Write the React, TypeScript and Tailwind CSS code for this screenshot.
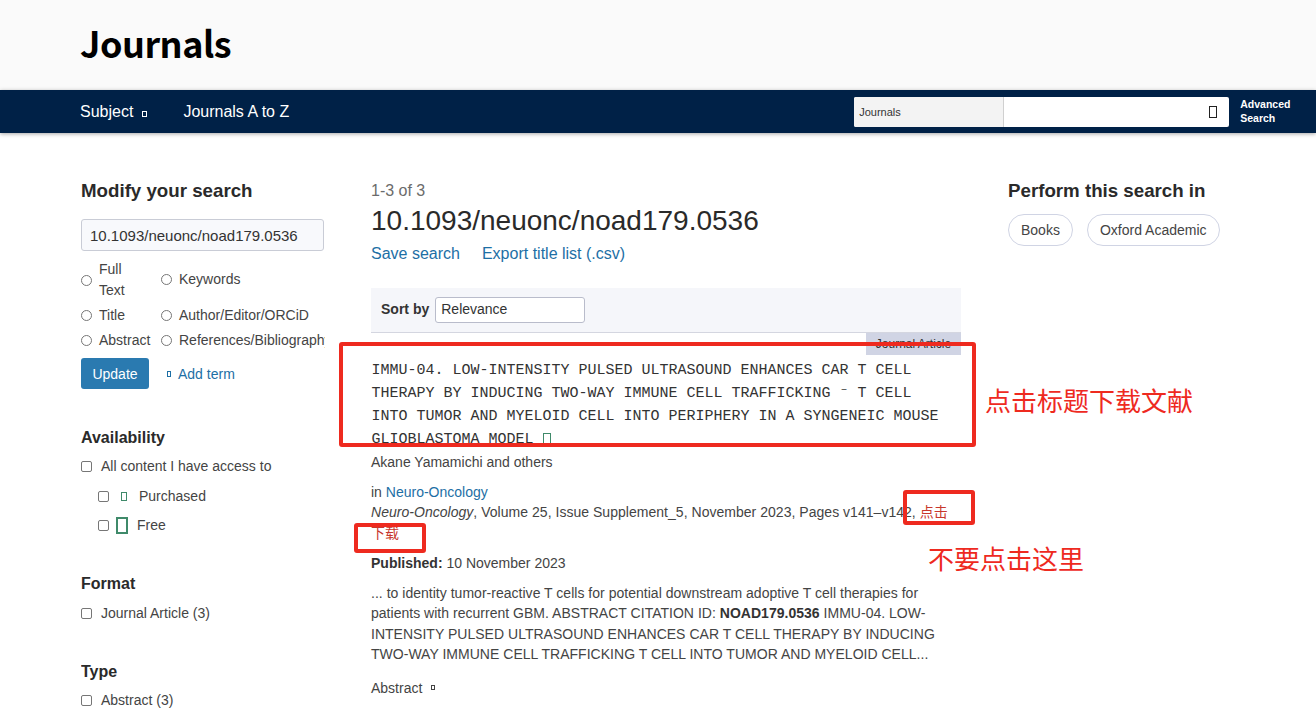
import React from "react";

const Tofu = ({ className = "" }: { className?: string }) => (
  <span className={`inline-block border ${className}`} />
);

const Radio = ({ label, className = "" }: { label: React.ReactNode; className?: string }) => (
  <div className={`flex items-center ${className}`}>
    <span className="w-[11px] h-[11px] shrink-0 rounded-full border border-[#767676] bg-white" />
    <span className="ml-[7px] text-[14px] leading-[21px] text-[#444] whitespace-nowrap">{label}</span>
  </div>
);

const Check = ({ label, className = "" }: { label: React.ReactNode; className?: string }) => (
  <div className={`flex items-center ${className}`}>
    <span className="w-[11px] h-[11px] shrink-0 rounded-[2px] border border-[#767676] bg-white" />
    <span className="ml-[9px] text-[14px] leading-[20px] text-[#444] whitespace-nowrap">{label}</span>
  </div>
);

function Sidebar() {
  return (
    <aside className="w-[244px] shrink-0 overflow-hidden text-[#333]">
      <h2 className="text-[18.72px] leading-[24px] font-bold text-[#2a2a2a]">Modify your search</h2>
      <div className="mt-[16px] w-[243px] h-[32px] rounded-[3px] border border-[#c9ccd6] bg-[#f8f9fc] pl-[8px] text-[15px] leading-[31px] text-[#333]">
        10.1093/neuonc/noad179.0536
      </div>
      <div className="mt-[8px] grid grid-cols-[80px_1fr]">
        <Radio label={<span className="block whitespace-normal w-[40px]">Full Text</span>} />
        <Radio label="Keywords" className="-mt-[2px]" />
        <Radio label="Title" className="mt-[4px]" />
        <Radio label="Author/Editor/ORCiD" className="mt-[4px]" />
        <Radio label="Abstract" className="mt-[4px]" />
        <Radio label="References/Bibliography" className="mt-[4px]" />
      </div>
      <div className="mt-[7px] flex items-center">
        <span className="w-[68px] h-[31px] rounded-[3px] bg-[#2a7ab0] text-white text-[14px] leading-[32px] text-center">Update</span>
        <Tofu className="ml-[18px] w-[4px] h-[6px] border-[#1d6fa5]" />
        <span className="ml-[7px] pt-[1px] text-[14px] text-[#1d6fa5]">Add term</span>
      </div>
      <h3 className="mt-[38px] text-[16px] leading-[22px] font-bold text-[#2a2a2a]">Availability</h3>
      <Check label="All content I have access to" className="mt-[7px]" />
      <div className="mt-[10px] ml-[17px] flex items-center h-[20px]">
        <span className="w-[11px] h-[11px] rounded-[2px] border border-[#767676] bg-white" />
        <Tofu className="ml-[12px] w-[6px] h-[9px] border-[#3f8a6a]" />
        <span className="ml-[12px] text-[14px] text-[#444]">Purchased</span>
      </div>
      <div className="mt-[9px] ml-[17px] flex items-center h-[20px]">
        <span className="w-[11px] h-[11px] rounded-[2px] border border-[#767676] bg-white" />
        <Tofu className="ml-[7px] w-[12px] h-[17px] border-2 border-[#3f8a6a]" />
        <span className="ml-[9px] text-[14px] text-[#444]">Free</span>
      </div>
      <h3 className="mt-[38px] text-[16px] leading-[22px] font-bold text-[#2a2a2a]">Format</h3>
      <Check label="Journal Article (3)" className="mt-[8px]" />
      <h3 className="mt-[38px] text-[16px] leading-[22px] font-bold text-[#2a2a2a]">Type</h3>
      <Check label="Abstract (3)" className="mt-[7px]" />
    </aside>
  );
}

function Main() {
  return (
    <main className="ml-[46px] w-[590px] shrink-0 text-[#333]">
      <div className="mt-[2px] text-[16px] leading-[20px] text-[#6b6b6b]">1-3 of 3</div>
      <h1 className="mt-[2px] text-[28px] leading-[36px] font-normal text-[#2a2a2a]">10.1093/neuonc/noad179.0536</h1>
      <div className="mt-[3px] flex gap-[22px] text-[16px] leading-[24px] text-[#1d6fa5]">
        <span>Save search</span>
        <span>Export title list (.csv)</span>
      </div>
      <div className="mt-[22px] h-[45px] flex items-center bg-[#f5f6fa] border-b border-[#d4d6e0] pl-[10px] pb-[2px]">
        <span className="text-[14px] font-bold text-[#333]">Sort by</span>
        <span className="ml-[6px] mt-[1px] w-[150px] h-[26px] rounded-[3px] border border-[#b9bccb] bg-white pl-[5px] text-[14px] leading-[23px] text-[#333]">Relevance</span>
      </div>
      <div className="flex justify-end">
        <span className="w-[95px] h-[22px] bg-[#d0d4e4] text-center text-[12px] leading-[22px] text-[#333]">Journal Article</span>
      </div>
      <div className="mt-[4px] pl-[0.5px] w-[580px] font-['Liberation_Mono',monospace] text-[15px] leading-[23px] text-[#333]">
        <div className="whitespace-nowrap">IMMU-04. LOW-INTENSITY PULSED ULTRASOUND ENHANCES CAR T CELL</div>
        <div className="whitespace-nowrap">THERAPY BY INDUCING TWO-WAY IMMUNE CELL TRAFFICKING ⁻ T CELL</div>
        <div className="whitespace-nowrap">INTO TUMOR AND MYELOID CELL INTO PERIPHERY IN A SYNGENEIC MOUSE</div>
        <div className="whitespace-nowrap flex items-center">
          GLIOBLASTOMA MODEL
          <Tofu className="ml-[9px] w-[8px] h-[13px] border-[#3f8a6a]" />
        </div>
      </div>
      <div className="mt-[1px] text-[14px] leading-[20px] text-[#444]">Akane Yamamichi and others</div>
      <div className="mt-[11px] text-[14px] leading-[19px] text-[#444]">
        in <span className="text-[#1d6fa5]">Neuro-Oncology</span>
      </div>
      <p className="text-[14px] leading-[21px] text-[#444] tracking-[0.03px]">
        <i>Neuro-Oncology</i>, Volume 25, Issue Supplement_5, November 2023, Pages v141–v142,{" "}
        <span className="text-[14px] leading-none text-[#c8372d] font-['Noto_Sans_CJK_SC',sans-serif]">
          点击
          <br />
          下载
        </span>
      </p>
      <div className="mt-[9px] text-[14px] leading-[20px] text-[#444]">
        <b className="text-[#333]">Published:</b> 10 November 2023
      </div>
      <p className="mt-[10px] text-[14px] leading-[20.4px] text-[#444] tracking-[0.02px]">
        ... to identity tumor-reactive T cells for potential downstream adoptive T cell therapies for patients with
        recurrent GBM. ABSTRACT CITATION ID: <b className="text-[#333]">NOAD179.0536</b> IMMU-04. LOW-INTENSITY PULSED
        ULTRASOUND ENHANCES CAR T CELL THERAPY BY INDUCING TWO-WAY IMMUNE CELL TRAFFICKING T CELL INTO TUMOR AND
        MYELOID CELL...
      </p>
      <div className="mt-[13px] flex items-center text-[14px] leading-[20px] text-[#444]">
        Abstract
        <Tofu className="ml-[9px] w-[4px] h-[5px] border-[#444]" />
      </div>
    </main>
  );
}

function RightCol() {
  return (
    <aside className="ml-[47px] w-[260px] shrink-0">
      <h2 className="text-[18.72px] leading-[24px] font-bold text-[#2a2a2a]">Perform this search in</h2>
      <div className="mt-[11px] flex gap-[14px]">
        <span className="h-[32px] px-[12px] rounded-full border border-[#d0d4e4] text-[14px] leading-[30px] text-[#444]">Books</span>
        <span className="h-[32px] px-[12px] rounded-full border border-[#d0d4e4] text-[14px] leading-[30px] text-[#444]">Oxford Academic</span>
      </div>
    </aside>
  );
}

export default function App() {
  return (
    <div className="relative w-[1316px] h-[717px] overflow-hidden bg-white font-['Liberation_Sans',Arial,sans-serif]">
      <header className="h-[90px] bg-[#fafafa] pl-[80px] pb-[6px] flex items-center">
        <span className="text-[36px] leading-[46px] font-bold text-black font-['Noto_Sans_CJK_SC',sans-serif] tracking-[-0.5px]">Journals</span>
      </header>
      <nav className="h-[43px] bg-[#002147] shadow-[0_1px_4px_rgba(0,0,0,0.35)] flex items-center pl-[80px] text-white relative">
        <span className="text-[16px]">Subject</span>
        <Tofu className="ml-[9px] mt-[4px] w-[5px] h-[6px] border-white" />
        <span className="ml-[36px] text-[16px]">Journals A to Z</span>
        <div className="ml-[565px] w-[375px] h-[30px] flex rounded-[2px] overflow-hidden bg-white">
          <span className="w-[150px] bg-[#f3f3f3] border-r border-[#d0d0d0] pl-[5px] text-[11px] leading-[30px] text-[#333]">Journals</span>
          <span className="flex-1 flex items-center justify-end pr-[12px]">
            <Tofu className="w-[8px] h-[12px] border-[#222]" />
          </span>
        </div>
        <span className="ml-[11px] -mt-[2px] text-[10.5px] leading-[14px] font-bold whitespace-pre">{"Advanced\nSearch"}</span>
      </nav>
      <div className="flex pl-[81px] pt-[46px]">
        <Sidebar />
        <Main />
        <RightCol />
      </div>

      {/* red annotations drawn over the page */}
      <div className="absolute left-[339px] top-[342px] w-[637px] h-[105px] rounded-[3px] border-[4px] border-[#ee2a1f]" />
      <div className="absolute left-[903px] top-[490px] w-[72px] h-[35px] rounded-[3px] border-[4px] border-[#ee2a1f]" />
      <div className="absolute left-[354px] top-[523px] w-[72px] h-[30px] rounded-[3px] border-[4px] border-[#ee2a1f]" />
      <span className="absolute left-[985px] top-[382px] text-[26px] leading-[36px] text-[#ee2a1f] font-['Noto_Sans_CJK_SC',sans-serif]">点击标题下载文献</span>
      <span className="absolute left-[928px] top-[540px] text-[26px] leading-[36px] text-[#ee2a1f] font-['Noto_Sans_CJK_SC',sans-serif]">不要点击这里</span>
    </div>
  );
}
